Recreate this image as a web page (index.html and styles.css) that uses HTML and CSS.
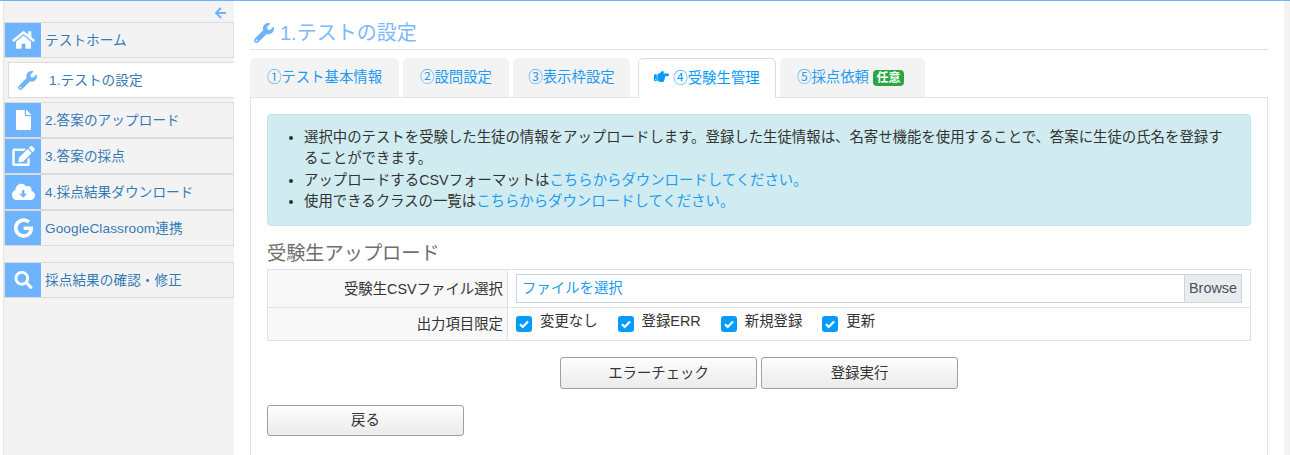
FILE: index.html
```html
<!DOCTYPE html>
<html lang="ja">
<head>
<meta charset="utf-8">
<title>1.テストの設定</title>
<link rel="stylesheet" href="styles.css">
</head>
<body>
<div class="page">
  <aside class="sidebar">
    <div class="collapse">
      <svg class="collapse-icon" viewBox="0 0 448 512"><path d="M257 463l-22 22c-9 9-25 9-34 0L7 290c-9-9-9-25 0-34L201 62c9-9 25-9 34 0l22 22c10 10 9 25 0 35L137 233h287c13 0 24 11 24 24v32c0 13-11 24-24 24H137l120 114c10 9 10 25 0 36z"/></svg>
    </div>
    <a class="nav-item">
      <span class="nav-icon"><svg viewBox="0 0 576 512"><path d="M280 148L96 300v164c0 9 7 16 16 16l112-1c9 0 16-7 16-16v-95c0-9 7-16 16-16h64c9 0 16 7 16 16v95c0 9 7 16 16 16l112 1c9 0 16-7 16-16V300L296 148c-5-4-11-4-16 0zM572 251l-84-69V44c0-7-5-12-12-12h-56c-7 0-12 5-12 12v72l-89-74c-18-14-43-14-61 0L4 251c-5 4-6 12-2 17l26 31c4 5 12 6 17 2L280 107c5-4 11-4 16 0l235 194c5 4 13 3 17-2l26-31c4-5 3-13-2-17z"/></svg></span>
      <span class="nav-label">テストホーム</span>
    </a>
    <a class="nav-active">
      <svg class="wrench" viewBox="0 0 512 512"><path d="M507 109c-2-9-13-12-20-5l-74 74-68-11-11-68 74-74c7-7 4-18-5-20-47-12-99 0-136 37-39 39-50 96-34 145L19 401c-25 25-25 67 0 92s67 25 92 0l214-214c49 17 106 6 145-34 37-37 49-90 37-136zM64 472c-13 0-24-11-24-24s11-24 24-24 24 11 24 24-11 24-24 24z"/></svg>
      <span class="nav-label-active">1.テストの設定</span>
    </a>
    <a class="nav-item">
      <span class="nav-icon"><svg viewBox="0 0 384 512"><path d="M224 136V0H24C11 0 0 11 0 24v464c0 13 11 24 24 24h336c13 0 24-11 24-24V160H248c-13 0-24-11-24-24zm160-14v6H256V0h6c6 0 12 3 17 7l98 98c4 5 7 11 7 17z"/></svg></span>
      <span class="nav-label">2.答案のアップロード</span>
    </a>
    <a class="nav-item">
      <span class="nav-icon"><svg viewBox="0 0 576 512"><path d="M402.6 83.2l90.2 90.2c3.8 3.8 3.8 10 0 13.8L274.4 405.6l-92.8 10.3c-12.4 1.4-22.9-9.1-21.5-21.5l10.3-92.8L388.8 83.2c3.8-3.8 10-3.8 13.8 0zm162-22.9l-48.8-48.8c-15.2-15.2-39.9-15.2-55.2 0l-35.4 35.4c-3.8 3.8-3.8 10 0 13.8l90.2 90.2c3.8 3.8 10 3.8 13.8 0l35.4-35.4c15.2-15.3 15.2-40 0-55.2zM384 346.2V448H64V128h229.8c3.2 0 6.2-1.3 8.5-3.5l40-40c7.6-7.6 2.2-20.5-8.5-20.5H48C21.5 64 0 85.5 0 112v352c0 26.5 21.5 48 48 48h352c26.5 0 48-21.5 48-48V306.2c0-10.7-12.9-16-20.5-8.5l-40 40c-2.2 2.3-3.5 5.3-3.5 8.5z"/></svg></span>
      <span class="nav-label">3.答案の採点</span>
    </a>
    <a class="nav-item">
      <span class="nav-icon"><svg viewBox="0 0 640 512"><path d="M538 222c4-11 6-22 6-34 0-53-43-96-96-96-20 0-38 6-54 16-27-47-78-80-136-80-88 0-160 72-160 160 0 3 0 5 0 8C42 215 0 271 0 336c0 80 64 144 144 144h368c71 0 128-57 128-128 0-62-44-114-102-130zm-131 99l-87 87c-5 5-11 5-16 0l-87-87c-7-7-2-19 8-19h55v-88c0-9 7-16 16-16h32c9 0 16 7 16 16v88h55c10 0 15 12 8 19z"/></svg></span>
      <span class="nav-label">4.採点結果ダウンロード</span>
    </a>
    <a class="nav-item">
      <span class="nav-icon"><svg viewBox="0 0 488 512"><path d="M488 261c0 142-97 243-240 243C110 504 0 393 0 256S110 8 248 8c67 0 123 25 167 65l-68 65C259 53 95 117 95 256c0 86 69 156 153 156 98 0 135-70 140-107H248v-86h236c2 13 4 25 4 42z"/></svg></span>
      <span class="nav-label">GoogleClassroom連携</span>
    </a>
    <a class="nav-item last">
      <span class="nav-icon"><svg class="search" viewBox="0 0 512 512"><path d="M505 443L405 343c-4-4-11-7-17-7h-16c28-35 44-80 44-128C416 93 323 0 208 0S0 93 0 208s93 208 208 208c48 0 93-16 128-44v16c0 6 3 13 7 17l100 100c9 9 24 9 34 0l28-28c9-10 9-25 0-34zM208 336c-71 0-128-57-128-128S137 80 208 80s128 57 128 128-57 128-128 128z"/></svg></span>
      <span class="nav-label">採点結果の確認・修正</span>
    </a>
  </aside>

  <main class="main">
    <h1 class="title">
      <svg class="title-icon" viewBox="0 0 512 512"><path d="M507 109c-2-9-13-12-20-5l-74 74-68-11-11-68 74-74c7-7 4-18-5-20-47-12-99 0-136 37-39 39-50 96-34 145L19 401c-25 25-25 67 0 92s67 25 92 0l214-214c49 17 106 6 145-34 37-37 49-90 37-136zM64 472c-13 0-24-11-24-24s11-24 24-24 24 11 24 24-11 24-24 24z"/></svg>
      <span>1.テストの設定</span>
    </h1>
    <nav class="tabs">
      <a class="tab t1">①テスト基本情報</a>
      <a class="tab t2">②設問設定</a>
      <a class="tab t3">③表示枠設定</a>
      <a class="tab t4 current">
        <svg class="hand" viewBox="0 0 512 512"><path d="M512 199.652c0 23.625-20.65 43.826-44.8 43.826h-99.851c16.34 17.048 18.346 49.766-6.299 70.944 14.288 22.829 2.147 53.017-16.45 62.315C353.574 425.878 322.654 448 272 448c-2.746 0-13.276-.203-16-.195-61.971.168-76.894-31.065-123.731-38.315C120.596 407.683 112 397.599 112 385.786V214.261l.002-.001c.011-18.366 10.607-35.889 28.464-43.845 28.886-12.994 95.413-49.038 107.534-77.323 7.797-18.194 21.384-29.084 40-29.092 34.222-.014 57.752 35.098 44.119 66.908-3.583 8.359-8.312 16.67-14.153 24.918H467.2c23.45 0 44.8 20.543 44.8 43.826zM96 200v192c0 13.255-10.745 24-24 24H24c-13.255 0-24-10.745-24-24V200c0-13.255 10.745-24 24-24h48c13.255 0 24 10.745 24 24zM68 368c0-11.046-8.954-20-20-20s-20 8.954-20 20 8.954 20 20 20 20-8.954 20-20z"/></svg>
        <span>④受験生管理</span>
      </a>
      <a class="tab t5"><span>⑤採点依頼</span><span class="badge">任意</span></a>
    </nav>
    <section class="panel">
      <div class="alert">
        <ul>
          <li>選択中のテストを受験した生徒の情報をアップロードします。登録した生徒情報は、名寄せ機能を使用することで、答案に生徒の氏名を登録することができます。</li>
          <li>アップロードするCSVフォーマットは<a class="link">こちらからダウンロードしてください。</a></li>
          <li>使用できるクラスの一覧は<a class="link">こちらからダウンロードしてください。</a></li>
        </ul>
      </div>
      <h2 class="section-title">受験生アップロード</h2>
      <div class="form-table">
        <div class="row file-row">
          <div class="label"><span class="label-file">受験生CSVファイル選択</span></div>
          <div class="field">
            <div class="file">
              <span class="file-name">ファイルを選択</span>
              <span class="file-btn">Browse</span>
            </div>
          </div>
        </div>
        <div class="row check-row">
          <div class="label"><span class="label-raised">出力項目限定</span></div>
          <div class="field checks">
            <label class="check"><span class="box"><svg viewBox="0 0 16 16"><path d="M4 8.2l2.7 2.7 5.3-5.4"/></svg></span><span class="check-text">変更なし</span></label>
            <label class="check"><span class="box"><svg viewBox="0 0 16 16"><path d="M4 8.2l2.7 2.7 5.3-5.4"/></svg></span><span class="check-text">登録ERR</span></label>
            <label class="check"><span class="box"><svg viewBox="0 0 16 16"><path d="M4 8.2l2.7 2.7 5.3-5.4"/></svg></span><span class="check-text">新規登録</span></label>
            <label class="check"><span class="box"><svg viewBox="0 0 16 16"><path d="M4 8.2l2.7 2.7 5.3-5.4"/></svg></span><span class="check-text">更新</span></label>
          </div>
        </div>
      </div>
      <div class="actions">
        <button class="btn">エラーチェック</button>
        <button class="btn">登録実行</button>
      </div>
      <button class="btn back">戻る</button>
    </section>
  </main>
  <div class="strip"></div>
</div>
</body>
</html>
```
FILE: styles.css
```css
* { box-sizing: border-box; }
html, body { margin: 0; padding: 0; height: 100%; overflow: hidden; background: #fff; }
body {
  font-family: "Liberation Sans", "Noto Sans CJK JP", sans-serif;
  font-size: 14.4px;
  color: #333;
}
.page {
  display: flex;
  height: 455px;
  border-top: 1px solid #6db3fe;
  padding-left: 3px;
}
.sidebar {
  width: 231px;
  flex: none;
  background: #f3f3f3;
  border-left: 1px solid #e4e4e4;
  display: flex;
  flex-direction: column;
}
.collapse {
  height: 21px;
  display: flex;
  justify-content: flex-end;
  align-items: center;
  padding: 2px 7px 0 0;
}
.collapse-icon { width: 13px; height: 13px; fill: #6db3fe; }
.nav-item {
  display: flex;
  align-items: center;
  height: 36px;
  border: 1px solid #dcdcdc;
  color: #337ab7;
  font-size: 13.6px;
  letter-spacing: 0.1px;
}
.nav-item.last { margin-top: 16px; }
.nav-icon {
  width: 36px;
  height: 34px;
  flex: none;
  background: #6db3fe;
  display: flex;
  align-items: center;
  justify-content: center;
}
.nav-icon svg { width: 23px; height: 20px; fill: #fff; }
.nav-icon svg.search { height: 18px; }
.nav-label { margin-left: 4px; padding-bottom: 2px; white-space: nowrap; }
.nav-active {
  display: flex;
  align-items: center;
  height: 36px;
  margin: 4px 0 4px 4px;
  padding-left: 9px;
  background: #fff;
  border: 1px solid #dcdcdc;
  border-right: 0;
  color: #337ab7;
  font-size: 13.6px;
  letter-spacing: 0.1px;
}
.nav-label-active { padding-bottom: 2px; }
.wrench { width: 19px; height: 19px; fill: #6db3fe; margin-right: 12px; flex: none; }
.main {
  flex: 1;
  padding: 0 16px;
  min-width: 0;
}
.title {
  margin: 0;
  height: 49px;
  padding-top: 18px;
  border-bottom: 1px solid #dee2e6;
  display: flex;
  align-items: flex-start;
  font-size: 20px;
  font-weight: 400;
  line-height: 29px;
  color: #7eb8fd;
}
.title-icon { width: 20px; height: 20px; fill: #6db3fe; margin: 4px 6px 0 4px; flex: none; }
.tabs {
  display: flex;
  height: 40px;
  margin-top: 8px;
  position: relative;
  z-index: 1;
}
.tab {
  display: flex;
  align-items: center;
  justify-content: center;
  height: 39px;
  padding-bottom: 4px;
  background: #f3f3f3;
  border-radius: 5px 5px 0 0;
  color: #1e9bf0;
  white-space: nowrap;
}
.t1 { width: 149px; margin-right: 4px; }
.t2 { width: 106px; margin-right: 4px; }
.t3 { width: 117px; margin-right: 8px; }
.t4 { width: 138px; margin-right: 4px; }
.t5 { width: 145px; padding-right: 4px; }
.tab.current {
  height: 40px;
  background: #fff;
  border: 1px solid #dcdcdc;
  border-bottom: 0;
  color: #049bfd;
}
.hand { width: 15px; height: 15px; fill: #049bfd; margin-right: 4px; }
.badge {
  margin: 4px 0 0 4px;
  background: #28a745;
  color: #fff;
  font-size: 12px;
  font-weight: 700;
  line-height: 16px;
  width: 31px;
  text-align: center;
  border-radius: 4px;
}
.panel {
  margin-top: -1px;
  height: 370px;
  border: 1px solid #dee2e6;
  border-bottom: 0;
  padding: 16px;
}
.alert {
  height: 112px;
  background: #d1ecf1;
  border: 1px solid #bee5eb;
  border-radius: 4px;
  padding: 12px 20px 0 0;
  line-height: 21.3px;
}
.alert ul { margin: 0; padding-left: 36px; }
.link { color: #1e9bf0; }
.section-title {
  margin: 17px 0 4px;
  font-size: 19.2px;
  font-weight: 400;
  line-height: 22px;
  color: #6e6e6e;
}
.form-table {
  border: 1px solid #dee2e6;
  border-bottom: 0;
}
.row { display: flex; border-bottom: 1px solid #dee2e6; }
.file-row { height: 38px; }
.check-row { height: 33px; }
.label {
  width: 240px;
  flex: none;
  background: #f8f8f8;
  border-right: 1px solid #dee2e6;
  padding-right: 4px;
  display: flex;
  align-items: center;
  justify-content: flex-end;
}
.label-file { padding-bottom: 2px; }
.label-raised { padding-bottom: 3px; }
.field { flex: 1; min-width: 0; padding: 4px 8px; display: flex; align-items: center; }
.file {
  flex: 1;
  height: 29px;
  display: flex;
  border: 1px solid #ced4da;
}
.file-name {
  flex: 1;
  padding-left: 5px;
  line-height: 26px;
  color: #1e9bf0;
}
.file-btn {
  width: 57px;
  background: #e9ecef;
  border-left: 1px solid #ced4da;
  text-align: center;
  line-height: 27px;
  color: #495057;
}
.checks { gap: 20px; padding: 0 8px; }
.check { display: flex; align-items: center; white-space: nowrap; }
.check-text { padding-bottom: 9px; }
.box {
  width: 16px;
  height: 16px;
  background: #049bfd;
  border-radius: 3px;
  margin-right: 8px;
}
.box svg { display: block; width: 16px; height: 16px; fill: none; stroke: #fff; stroke-width: 2.2; }
.actions {
  display: flex;
  justify-content: center;
  gap: 4px;
  margin-top: 16px;
}
.btn {
  width: 197px;
  height: 32px;
  font: inherit;
  color: #333;
  background: linear-gradient(#fdfdfd, #ebebeb);
  border: 1px solid #a0a0a0;
  border-radius: 3px;
  padding: 0 0 4px;
}
.back { display: block; margin-top: 16px; height: 31px; }
.strip { width: 6px; flex: none; background: #f3f3f3; }
```
